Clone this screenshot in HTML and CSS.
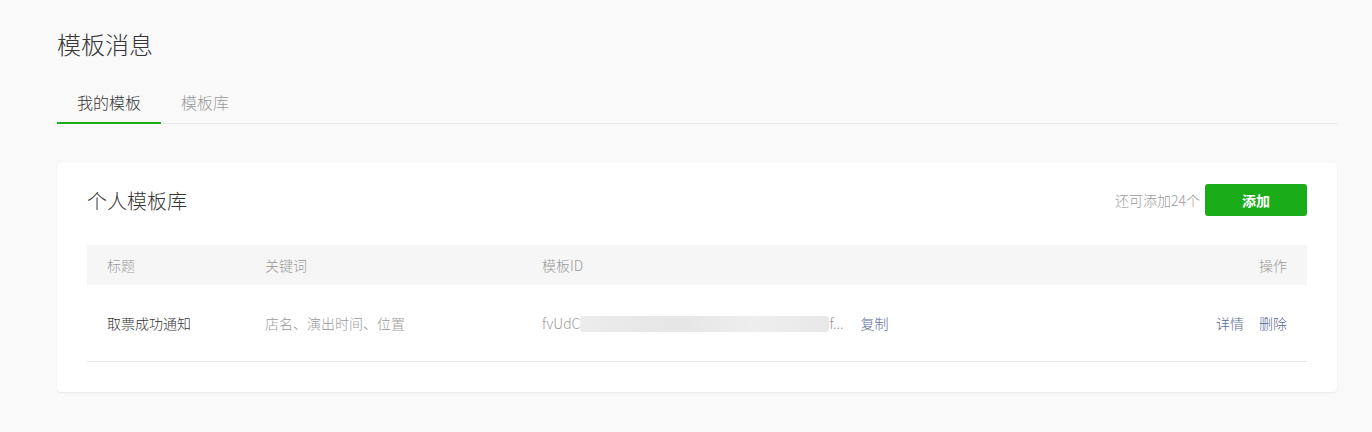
FILE: index.html
```html
<!DOCTYPE html>
<html lang="zh-CN">
  <head>
    <meta charset="UTF-8" />
    <title>模板消息</title>
    <link rel="stylesheet" href="styles.css">
  </head>
  <body>
    <div class="page">
      <h2 class="page-title">模板消息</h2>
      <div class="tabs">
        <div class="tab active">我的模板</div>
        <div class="tab">模板库</div>
      </div>
      <div class="card">
        <div class="card-head">
          <h3>个人模板库</h3>
          <div class="card-actions">
            <span class="tip">还可添加24个</span>
            <button class="btn-add">添加</button>
          </div>
        </div>
        <table class="tpl-table">
          <thead>
            <tr>
              <th class="col-title">标题</th>
              <th class="col-key">关键词</th>
              <th class="col-id">模板ID</th>
              <th class="col-op">操作</th>
            </tr>
          </thead>
          <tbody>
            <tr>
              <td class="col-title">取票成功通知</td>
              <td class="col-key muted">店名、演出时间、位置</td>
              <td class="col-id muted">
                fvUdC<span class="mask"></span>f...
                <a class="link copy" href="#">复制</a>
              </td>
              <td class="col-op">
                <a class="link" href="#">详情</a>
                <a class="link" href="#">删除</a>
              </td>
            </tr>
          </tbody>
        </table>
      </div>
    </div>
  </body>
</html>
```

FILE: styles.css
```css
body {
  margin: 0;
  background: #f9f9fa;
  font-family: "Noto Sans CJK SC", "Liberation Sans", sans-serif;
  font-weight: 300;
  color: #353535;
}
.page {
  padding: 26px 35px 40px 57px;
}
.page-title {
  margin: 0 0 20px;
  font-size: 24px;
  font-weight: 300;
  line-height: 36px;
  color: #353535;
}
.tabs {
  display: flex;
  border-bottom: 1px solid #e7e7eb;
}
.tab {
  padding: 0 20px;
  font-size: 16px;
  line-height: 40px;
  color: #9a9a9a;
  border-bottom: 2px solid transparent;
  margin-bottom: -1px;
}
.tab.active {
  color: #353535;
  border-bottom-color: #1aad19;
}
.card {
  margin-top: 39px;
  background: #fff;
  border-radius: 4px;
  box-shadow: 0 1px 2px rgba(0, 0, 0, 0.07);
  padding: 20px 30px 30px;
}
.card-head {
  display: flex;
  align-items: center;
  justify-content: space-between;
  height: 34px;
}
.card-head h3 {
  margin: 0;
  font-size: 20px;
  font-weight: 300;
  color: #353535;
}
.card-actions {
  display: flex;
  align-items: center;
  gap: 5px;
}
.tip {
  font-size: 14px;
  color: #9a9a9a;
}
.btn-add {
  width: 102px;
  height: 32px;
  border: none;
  border-radius: 3px;
  background: #1aad19;
  color: #fff;
  font-family: inherit;
  font-size: 14px;
  font-weight: bold;
}
.tpl-table {
  width: 100%;
  margin-top: 28px;
  border-collapse: collapse;
  font-size: 14px;
}
.tpl-table th {
  height: 40px;
  padding: 0 20px;
  background: #f6f6f6;
  color: #9a9a9a;
  font-weight: 300;
  text-align: left;
}
.tpl-table td {
  height: 76px;
  padding: 0 20px;
  border-bottom: 1px solid #e7e7eb;
  white-space: nowrap;
}
.col-title { width: 118px; }
.col-key { width: 237px; }
.tpl-table .col-op { text-align: right; }
.muted { color: #9a9a9a; }
.mask {
  display: inline-block;
  width: 249px;
  height: 16px;
  vertical-align: -3px;
  background: linear-gradient(90deg, #ececec, #e6e6e6 40%, #eeeeee 70%, #e8e8e8);
  border-radius: 3px;
}
.link {
  color: #576b95;
  text-decoration: none;
}
.copy { margin-left: 14px; }
.col-op .link { margin-left: 12px; }
```
